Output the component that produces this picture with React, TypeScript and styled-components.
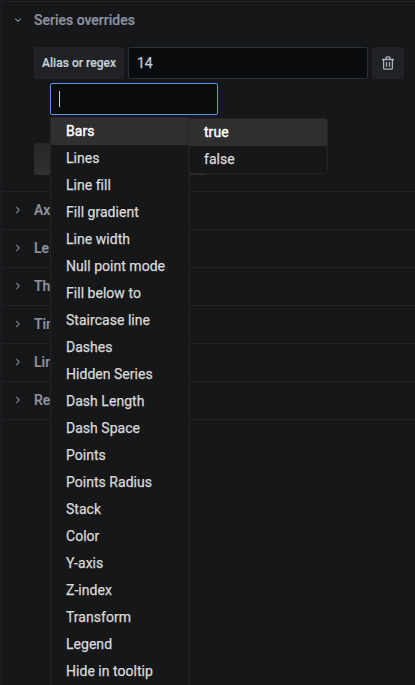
import React from 'react';
import styled, { createGlobalStyle } from 'styled-components';

const GlobalStyle = createGlobalStyle`
  * { box-sizing: border-box; }
  body {
    margin: 0;
    background: #161719;
    font-family: Roboto, "Liberation Sans", sans-serif;
    font-size: 14px;
    -webkit-font-smoothing: antialiased;
  }
`;

const Pane = styled.main`
  height: 685px;
  overflow: hidden;
  padding: 1px 0 0 1px;
  background: #161719;
`;

const Panel = styled.div`
  height: 100%;
  border-left: 1px solid #202226;
  border-top: 1px solid #202226;
`;

const Section = styled.section`
  border-bottom: 1px solid #202226;
`;

const Header = styled.header`
  display: flex;
  align-items: center;
  height: 37px;
  padding: 0 0 2px 11px;
  color: #8e929f;
`;

const Chevron = styled.svg`
  width: 10px;
  height: 10px;
  margin-right: 11px;
  fill: none;
  stroke: #7b8087;
  stroke-width: 1.2;
  stroke-linecap: round;
  stroke-linejoin: round;
`;

const Title = styled.span<{ $clipped?: boolean }>`
  width: ${p => (p.$clipped ? '16px' : 'auto')};
  overflow: hidden;
  font-weight: 500;
  line-height: 20px;
  white-space: nowrap;
  -webkit-text-stroke: 0.2px;
`;

const Body = styled.div`
  height: 152px;
  padding: 8px 11px 0 32px;
`;

const Row = styled.div`
  display: flex;
  gap: 4px;
`;

const FieldLabel = styled.label`
  display: flex;
  align-items: center;
  width: 90px;
  height: 32px;
  padding-left: 8px;
  border-radius: 2px;
  background: #202226;
  color: #c7d0d9;
  font-size: 12px;
  font-weight: 500;
  letter-spacing: 0.04px;
  white-space: nowrap;
  -webkit-text-stroke: 0.2px;
`;

const ValueBox = styled.div`
  display: flex;
  align-items: center;
  width: 240px;
  height: 32px;
  padding-left: 8px;
  border: 1px solid #2c3235;
  border-radius: 2px;
  background: #0b0c0e;
  color: #c7d0d9;
  -webkit-text-stroke: 0.25px;
`;

const RemoveButton = styled.button`
  display: grid;
  place-items: center;
  width: 32px;
  height: 32px;
  padding: 0;
  border: 0;
  border-radius: 2px;
  background: #202226;
`;

const Property = styled.div`
  position: relative;
  width: 168px;
  margin: 4px 0 0 16px;
`;

const PropertyInput = styled.div`
  display: flex;
  align-items: center;
  height: 32px;
  padding-left: 8px;
  border: 1px solid #5794f2;
  border-radius: 2px;
  background: #0b0c0e;
`;

const Caret = styled.i`
  width: 1px;
  height: 16px;
  background: #c7d0d9;
`;

const AddButton = styled.div`
  width: 173px;
  height: 32px;
  margin-top: 28px;
  border-radius: 2px;
  background: linear-gradient(#262628, #303032);
`;

const Menu = styled.ul<{ $sub?: boolean }>`
  position: absolute;
  z-index: ${p => (p.$sub ? 2 : 1)};
  top: ${p => (p.$sub ? 0 : 34)}px;
  left: ${p => (p.$sub ? 137 : 0)}px;
  width: 140px;
  margin: 0;
  padding: 0;
  list-style: none;
  border: 1px solid #222426;
  border-radius: ${p => (p.$sub ? '0 4px 4px 4px' : '0')};
  background: #161719;
`;

const Item = styled.li<{ $active?: boolean }>`
  height: 27px;
  padding-left: 15px;
  line-height: 26px;
  letter-spacing: 0.03px;
  white-space: nowrap;
  color: ${p => (p.$active ? '#ffffff' : '#d8d9da')};
  -webkit-text-stroke: ${p => (p.$active ? '0.4px' : '0.25px')};
  background: ${p => (p.$active ? '#2f2f30' : 'transparent')};
`;

const options = [
  'Lines', 'Line fill', 'Fill gradient', 'Line width', 'Null point mode',
  'Fill below to', 'Staircase line', 'Dashes', 'Hidden Series', 'Dash Length',
  'Dash Space', 'Points', 'Points Radius', 'Stack', 'Color', 'Y-axis',
  'Z-index', 'Transform', 'Legend', 'Hide in tooltip',
];

const sections = ['Ax', 'Le', 'Th', 'Tim', 'Lin', 'Re'];

const SectionHeader = ({ title, open }: { title: string; open?: boolean }) => (
  <Header>
    <Chevron viewBox="0 0 10 10">
      <path d={open ? 'M2.3 3.9 5 6.3 7.7 3.9' : 'M3.6 2.3 6.2 5 3.6 7.7'} />
    </Chevron>
    <Title $clipped={!open}>{title}</Title>
  </Header>
);

const TrashIcon = () => (
  <svg width="12" height="14" viewBox="0 0 12 14" fill="none" stroke="#a9b1ba" strokeWidth="1.3" strokeLinejoin="round">
    <path d="M0 3.5H12M4 3V1.7Q4 .8 4.9.8H7.1Q8 .8 8 1.7V3M1.6 3.5V12Q1.6 13.2 2.8 13.2H9.2Q10.4 13.2 10.4 12V3.5M4.5 6V10.7M7.5 6V10.7" />
  </svg>
);

export default function App() {
  return (
    <>
      <GlobalStyle />
      <Pane>
        <Panel>
          <Section>
            <SectionHeader title="Series overrides" open />
            <Body>
              <Row>
                <FieldLabel>Alias or regex</FieldLabel>
                <ValueBox>14</ValueBox>
                <RemoveButton aria-label="Remove override"><TrashIcon /></RemoveButton>
              </Row>
              <Property>
                <PropertyInput><Caret /></PropertyInput>
                <Menu>
                  <Item $active>
                    Bars
                    <Menu $sub>
                      <Item $active>true</Item>
                      <Item>false</Item>
                    </Menu>
                  </Item>
                  {options.map(name => <Item key={name}>{name}</Item>)}
                </Menu>
              </Property>
              <AddButton />
            </Body>
          </Section>
          {sections.map(title => (
            <Section key={title}><SectionHeader title={title} /></Section>
          ))}
        </Panel>
      </Pane>
    </>
  );
}
